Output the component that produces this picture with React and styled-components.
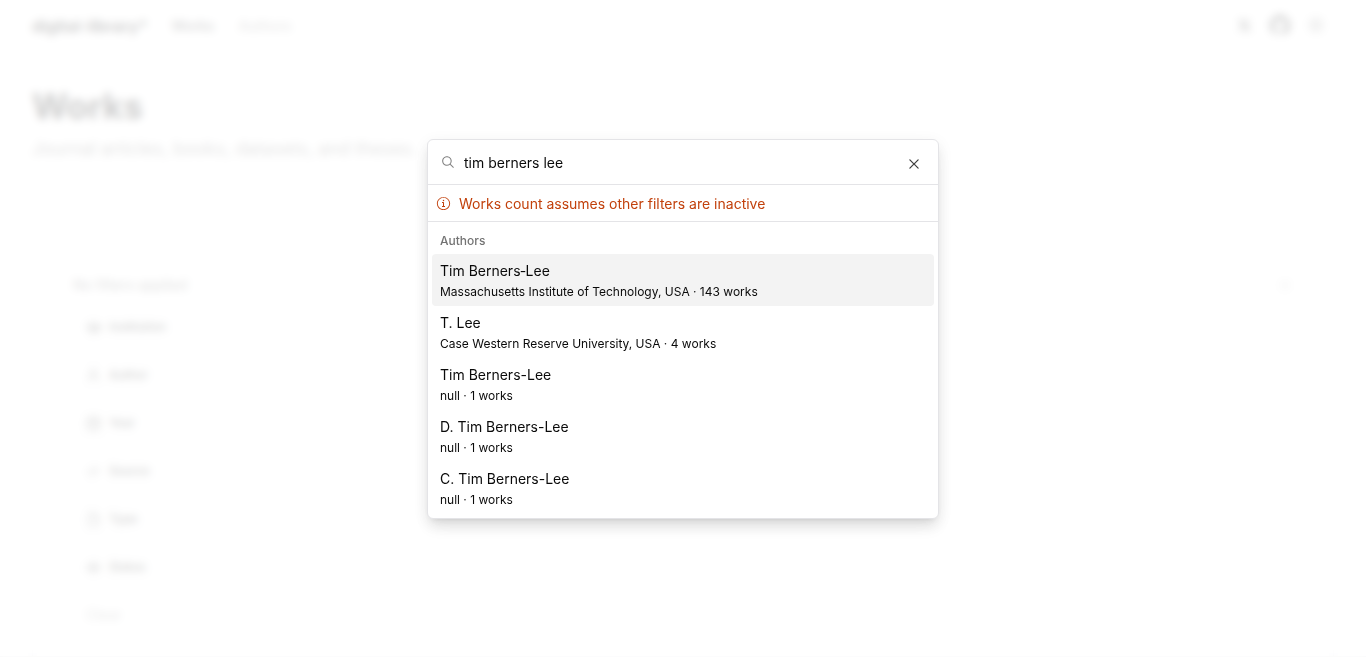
import React from "react";
import styled, { createGlobalStyle, css } from "styled-components";
import {
  RxMagnifyingGlass,
  RxCross2,
  RxInfoCircled,
  RxPerson,
  RxCalendar,
  RxFile,
  RxSun,
  RxCode,
  RxEyeOpen,
  RxCrossCircled,
} from "react-icons/rx";
import { FaXTwitter } from "react-icons/fa6";
import { SiGithub } from "react-icons/si";
import { LuGraduationCap } from "react-icons/lu";

const GlobalStyle = createGlobalStyle`
  *, *::before, *::after { box-sizing: border-box; }
  body {
    margin: 0;
    background: #fff;
    color: #0a0a0a;
    font-family: Inter, "Liberation Sans", sans-serif;
    font-size: 14px;
    line-height: 20px;
  }
  button, input { font: inherit; color: inherit; }
  h1, h2, p, ul { margin: 0; padding: 0; }
  ul { list-style: none; }
`;

const Page = styled.div`
  height: 100vh;
  overflow: hidden;
  padding: 0 32px;
  border-bottom: 1px solid #e4e4e7;
`;

const Header = styled.header`
  display: flex;
  align-items: center;
  height: 52px;
  gap: 24px;
`;

const Brand = styled.a`
  font-size: 16px;
  font-weight: 700;
  color: inherit;
  text-decoration: none;
`;

const NavLink = styled.a`
  font-weight: 500;
  text-decoration: none;
  color: ${(p) => (p.$active ? "#333333" : "#8a8a8a")};
`;

const HeaderActions = styled.div`
  display: flex;
  margin-left: auto;
  margin-bottom: 2px;
`;

const IconButton = styled.button`
  display: grid;
  place-items: center;
  width: ${(p) => (p.$small ? 16 : 36)}px;
  height: 36px;
  padding: 0;
  border: 0;
  background: none;
`;

const Title = styled.h1`
  margin-top: 34px;
  font-size: 35px;
  line-height: 40px;
  font-weight: 700;
`;

const Subtitle = styled.p`
  margin-top: 8px;
  font-size: 18px;
  line-height: 30px;
  color: #737373;
`;

const Panel = styled.section`
  margin-top: 54px;
  padding: 48px 40px;
  border: 1px solid #e4e4e7;
  border-radius: 8px;
`;

const PanelTop = styled.div`
  display: flex;
  justify-content: space-between;
  align-items: center;
  height: 36px;
  font-weight: 500;
  color: #737373;
`;

const Filters = styled.div`
  display: flex;
  flex-direction: column;
  align-items: flex-start;
  gap: 16px;
  margin-top: 8px;
`;

const FilterButton = styled.button`
  display: flex;
  align-items: center;
  gap: 8px;
  height: 32px;
  padding: 0 12px;
  border: 1px solid #e4e4e7;
  border-radius: 6px;
  background: none;
  font-size: 12px;
  font-weight: 500;
  ${(p) =>
    p.$plain &&
    css`
      border-color: transparent;
      color: #a3a3a3;
      font-size: 14px;
    `}
`;

const Overlay = styled.div`
  position: fixed;
  inset: 0;
  display: grid;
  place-items: center;
  padding-top: 1px;
  background: rgba(255, 255, 255, 0.8);
  backdrop-filter: blur(4px);
`;

const Dialog = styled.div`
  width: 100%;
  max-width: 512px;
  overflow: hidden;
  border: 1px solid #e4e4e7;
  border-radius: 6px;
  background: #fff;
  box-shadow: 0 10px 15px -3px rgba(0, 0, 0, 0.1),
    0 4px 6px -4px rgba(0, 0, 0, 0.1),
    0 4px 16px rgba(0, 0, 0, 0.07);
`;

const SearchRow = styled.div`
  display: flex;
  align-items: center;
  gap: 8px;
  height: 45px;
  padding: 0 16px 0 12px;
  border-bottom: 1px solid #e4e4e7;
`;

const SearchLabel = styled.label`
  display: flex;
  color: #858585;
`;

const SearchInput = styled.input`
  flex: 1;
  min-width: 0;
  height: 44px;
  padding: 0;
  border: 0;
  outline: 0;
  background: transparent;
`;

const CloseButton = styled.button`
  display: flex;
  align-self: flex-end;
  margin-bottom: 12px;
  padding: 0;
  border: 0;
  background: none;
  color: #404040;
`;

const Notice = styled.div`
  display: flex;
  align-items: center;
  gap: 8px;
  height: 37px;
  padding: 0 8px;
  border-bottom: 1px solid #e4e4e7;
  color: #c2410c;
`;

const NoticeText = styled.span`
  padding-top: 2px;
`;

const Results = styled.section`
  padding: 4px;
`;

const GroupHeading = styled.h2`
  && { padding: 7px 8px 5px; }
  font-size: 12px;
  line-height: 16px;
  font-weight: 500;
  color: #737373;
`;

const Result = styled.li`
  display: flex;
  flex-direction: column;
  gap: 2px;
  padding: 6px 8px;
  border-radius: 4px;
  background: ${(p) => (p.$selected ? "#f3f3f3" : "transparent")};
`;

const Name = styled.span`
  line-height: 22px;
`;

const Meta = styled.span`
  font-size: 12px;
  line-height: 16px;
`;

const filters = [
  ["Institution", LuGraduationCap],
  ["Author", RxPerson],
  ["Year", RxCalendar],
  ["Source", RxCode],
  ["Type", RxFile],
  ["Status", RxEyeOpen],
];

const authors = [
  ["Tim Berners\u2010Lee", "Massachusetts Institute of Technology, USA", 143],
  ["T. Lee", "Case Western Reserve University, USA", 4],
  ["Tim Berners-Lee", "null", 1],
  ["D. Tim Berners-Lee", "null", 1],
  ["C. Tim Berners-Lee", "null", 1],
];

export default function App() {
  return (
    <>
      <GlobalStyle />
      <Page>
        <Header>
          <Brand href="#">digital-library*</Brand>
          <NavLink href="#works" $active>Works</NavLink>
          <NavLink href="#authors">Authors</NavLink>
          <HeaderActions>
            <IconButton aria-label="X"><FaXTwitter size={15} /></IconButton>
            <IconButton aria-label="GitHub"><SiGithub size={20} /></IconButton>
            <IconButton aria-label="Theme"><RxSun size={18} /></IconButton>
          </HeaderActions>
        </Header>
        <Title>Works</Title>
        <Subtitle>Journal articles, books, datasets, and theses.</Subtitle>
        <Panel>
          <PanelTop>
            <span>No filters applied</span>
            <IconButton $small aria-label="Remove filters">
              <RxCrossCircled size={12} color="#a3a3a3" />
            </IconButton>
          </PanelTop>
          <Filters>
            {filters.map(([label, Icon]) => (
              <FilterButton key={label}>
                <Icon size={15} />
                {label}
              </FilterButton>
            ))}
            <FilterButton $plain>Clear</FilterButton>
          </Filters>
        </Panel>
      </Page>
      <Overlay>
        <Dialog role="dialog" aria-modal="true" aria-label="Search authors">
          <SearchRow>
            <SearchLabel htmlFor="query" aria-label="Search">
              <RxMagnifyingGlass size={16} />
            </SearchLabel>
            <SearchInput id="query" type="text" defaultValue="tim berners lee" />
            <CloseButton aria-label="Close"><RxCross2 size={16} /></CloseButton>
          </SearchRow>
          <Notice role="alert">
            <RxInfoCircled size={15} />
            <NoticeText>Works count assumes other filters are inactive</NoticeText>
          </Notice>
          <Results>
            <GroupHeading>Authors</GroupHeading>
            <ul>
              {authors.map(([name, place, count], i) => (
                <Result key={i} $selected={i === 0}>
                  <Name>{name}</Name>
                  <Meta>{`${place} · ${count} works`}</Meta>
                </Result>
              ))}
            </ul>
          </Results>
        </Dialog>
      </Overlay>
    </>
  );
}
